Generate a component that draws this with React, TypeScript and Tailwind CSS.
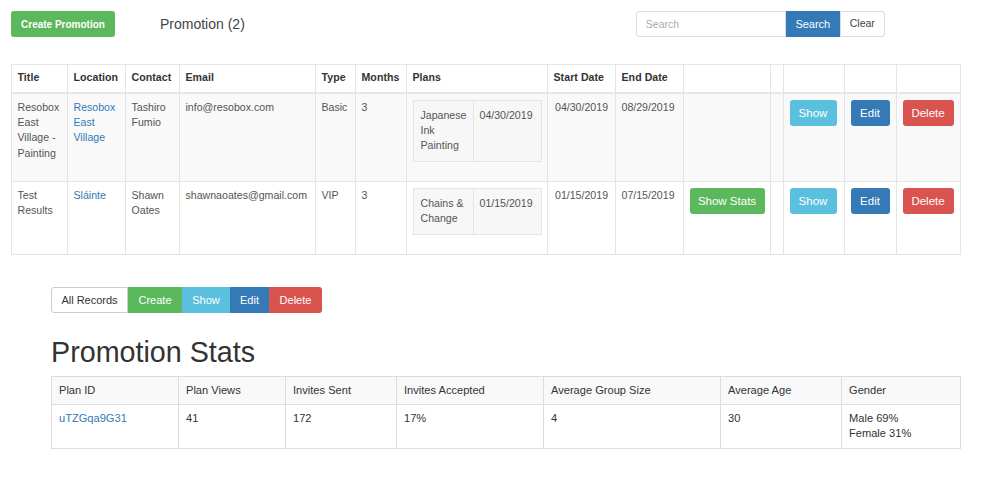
const font = 'font-["Liberation_Sans",Arial,sans-serif]';

const th = 'border border-[#e5e5e5] border-b-2 pl-[5.5px] pr-[6px] py-0 h-[28px] text-left font-bold text-[10.6px] text-[#333] tracking-[0.05px]';
const td = 'border border-[#e5e5e5] pl-[5.5px] pr-[6px] pt-[6px] pb-0 align-top text-[10.6px] leading-[15.4px] text-[#555]';
const tdDate = 'border border-[#e5e5e5] pl-[7px] pr-[4px] pt-[6px] pb-0 align-top text-[10.6px] leading-[15.4px] text-[#555]';
const btn = 'inline-block h-[26px] rounded-[3px] text-center text-[11.5px] leading-[26px] text-white';
const link = 'text-[#337ab7]';

const headers = ['Title', 'Location', 'Contact', 'Email', 'Type', 'Months', 'Plans', 'Start Date', 'End Date', '', '', '', '', ''];
const colWidths = [56, 58, 54, 136, 40, 51, 141, 68, 68, 87, 13, 61, 52, 64];

interface PromotionRow {
  title: string;
  location: string;
  contact: string;
  email: string;
  type: string;
  months: string;
  plan: string;
  planDate: string;
  start: string;
  end: string;
  stats: boolean;
  striped: boolean;
  height: string;
}

const rows: PromotionRow[] = [
  {
    title: 'Resobox East Village - Painting',
    location: 'Resobox East Village',
    contact: 'Tashiro Fumio',
    email: 'info@resobox.com',
    type: 'Basic',
    months: '3',
    plan: 'Japanese Ink Painting',
    planDate: '04/30/2019',
    start: '04/30/2019',
    end: '08/29/2019',
    stats: false,
    striped: true,
    height: 'h-[89px]',
  },
  {
    title: 'Test Results',
    location: 'Sláinte',
    contact: 'Shawn Oates',
    email: 'shawnaoates@gmail.com',
    type: 'VIP',
    months: '3',
    plan: 'Chains & Change',
    planDate: '01/15/2019',
    start: '01/15/2019',
    end: '07/15/2019',
    stats: true,
    striped: false,
    height: 'h-[73px]',
  },
];

const statHeaders = ['Plan ID', 'Plan Views', 'Invites Sent', 'Invites Accepted', 'Average Group Size', 'Average Age', 'Gender'];
const statWidths = [127, 107, 111, 147, 177, 121, 119];

export default function App() {
  return (
    <div className={`${font} w-[1000px] h-[500px] overflow-hidden bg-white pt-[11px] pl-[11px]`}>
      {/* Top bar */}
      <div className="flex items-center h-[26px]">
        <button className="w-[104px] h-[26px] rounded-[3px] bg-[#5cb85c] text-[10px] font-bold text-white">Create Promotion</button>
        <div className="ml-[45px] text-[14px] text-[#444]">Promotion (2)</div>
        <div className="ml-[391px] flex">
          <input
            placeholder="Search"
            className="w-[150px] h-[26px] rounded-l-[3px] border border-[#ddd] px-[9px] text-[10.5px] text-[#555] outline-none placeholder:text-[#aaa]"
          />
          <button className="w-[54px] h-[26px] bg-[#337ab7] text-[11px] text-white">Search</button>
          <button className="w-[45px] h-[26px] rounded-r-[3px] border border-[#ddd] bg-white text-[10.5px] text-[#444]">Clear</button>
        </div>
      </div>

      {/* Promotions table */}
      <table className="mt-[27px] w-[950px] table-fixed border-collapse">
        <colgroup>
          {colWidths.map((w, i) => (
            <col key={i} style={{ width: w }} />
          ))}
        </colgroup>
        <thead>
          <tr>
            {headers.map((h, i) => (
              <th key={i} className={th}>{h}</th>
            ))}
          </tr>
        </thead>
        <tbody>
          {rows.map((r) => (
            <tr key={r.email} className={`${r.height} ${r.striped ? 'bg-[#f9f9f9]' : 'bg-white'}`}>
              <td className={td}>{r.title}</td>
              <td className={td}><span className={link}>{r.location}</span></td>
              <td className={td}>{r.contact}</td>
              <td className={td}>{r.email}</td>
              <td className={td}>{r.type}</td>
              <td className={td}>{r.months}</td>
              <td className={td}>
                <table className="w-[129px] table-fixed border-collapse bg-[#f7f7f7]">
                  <tbody>
                    <tr>
                      <td className="w-[60px] border border-[#e5e5e5] pl-[7px] pr-[4px] py-[7px] align-top">{r.plan}</td>
                      <td className="border border-[#e5e5e5] px-[6px] py-[7px] align-top">{r.planDate}</td>
                    </tr>
                  </tbody>
                </table>
              </td>
              <td className={tdDate}>{r.start}</td>
              <td className={td}>{r.end}</td>
              <td className={td}>
                {r.stats && <span className={`${btn} w-[75px] bg-[#5cb85c]`}>Show Stats</span>}
              </td>
              <td className={td}></td>
              <td className={td}><span className={`${btn} w-[47px] bg-[#5bc0de]`}>Show</span></td>
              <td className={td}><span className={`${btn} w-[39px] bg-[#337ab7]`}>Edit</span></td>
              <td className={td}><span className={`${btn} w-[51px] bg-[#d9534f]`}>Delete</span></td>
            </tr>
          ))}
        </tbody>
      </table>

      <div className="ml-[40px]">
        {/* Action group */}
        <div className="mt-[32px] flex h-[26px] text-[11px] leading-[26px] text-center text-white">
          <span className="w-[77px] rounded-l-[3px] border border-[#ccc] leading-[24px] text-[#333]">All Records</span>
          <span className="w-[54px] bg-[#5cb85c]">Create</span>
          <span className="w-[48px] bg-[#5bc0de]">Show</span>
          <span className="w-[39px] bg-[#337ab7]">Edit</span>
          <span className="w-[53px] rounded-r-[3px] bg-[#d9534f]">Delete</span>
        </div>

        <h1 className="mt-[22px] h-[41px] text-[28.7px] leading-[34px] font-normal text-[#333]">Promotion Stats</h1>

        {/* Stats table */}
        <table className="w-[909px] table-fixed border-collapse text-[11.1px] leading-[15px] text-[#333]">
          <colgroup>
            {statWidths.map((w, i) => (
              <col key={i} style={{ width: w }} />
            ))}
          </colgroup>
          <thead>
            <tr className="h-[28px] bg-[#f9f9f9]">
              {statHeaders.map((h) => (
                <th key={h} className="border border-[#ddd] px-[7px] text-left font-normal">{h}</th>
              ))}
            </tr>
          </thead>
          <tbody>
            <tr className="h-[44px]">
              <td className="border border-[#ddd] px-[7px] pt-[6px] align-top"><span className={link}>uTZGqa9G31</span></td>
              <td className="border border-[#ddd] px-[7px] pt-[6px] align-top">41</td>
              <td className="border border-[#ddd] px-[7px] pt-[6px] align-top">172</td>
              <td className="border border-[#ddd] px-[7px] pt-[6px] align-top">17%</td>
              <td className="border border-[#ddd] px-[7px] pt-[6px] align-top">4</td>
              <td className="border border-[#ddd] px-[7px] pt-[6px] align-top">30</td>
              <td className="border border-[#ddd] px-[7px] pt-[6px] align-top">Male 69%<br />Female 31%</td>
            </tr>
          </tbody>
        </table>
      </div>
    </div>
  );
}
